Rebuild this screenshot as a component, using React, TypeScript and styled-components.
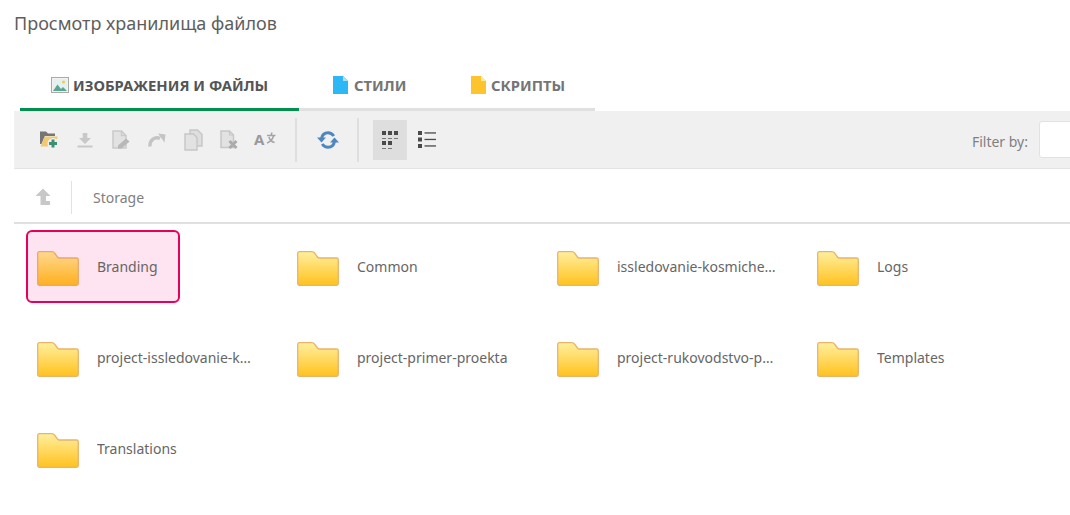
import styled, { createGlobalStyle } from 'styled-components';

const GlobalStyle = createGlobalStyle`
  html, body {
    margin: 0;
    padding: 0;
    background: #ffffff;
    overflow: hidden;
  }
  body {
    font-family: "Noto Sans", "Open Sans", sans-serif;
    color: #5b5b5b;
  }
`;

const Page = styled.div`
  width: 1070px;
  height: 515px;
  overflow: hidden;
  padding: 11px 0 0 14px;
  box-sizing: border-box;
`;

const Title = styled.h1`
  margin: 0;
  height: 24px;
  font-size: 18px;
  line-height: 24px;
  font-weight: 400;
  color: #5e5e5e;
`;

const TabStrip = styled.div`
  display: flex;
  width: 575px;
  height: 36px;
  margin: 37px 0 0 6px;
  border-bottom: 3px solid #e0e0e0;
`;

const Tab = styled.div<{ $active?: boolean; $width: number; $pad: number; $gap: number }>`
  display: flex;
  align-items: center;
  gap: ${({ $gap }) => $gap}px;
  width: ${({ $width }) => $width}px;
  height: 39px;
  padding: 0 0 11px ${({ $pad }) => $pad}px;
  box-sizing: border-box;
  border-bottom: 3px solid ${({ $active }) => ($active ? '#008f4c' : 'transparent')};
  font-size: 14.8px;
  font-weight: 700;
  color: ${({ $active }) => ($active ? '#555555' : '#757575')};
  white-space: nowrap;
`;

const Toolbar = styled.div`
  display: flex;
  align-items: center;
  width: 1090px;
  height: 58px;
  box-sizing: border-box;
  background: #f0f0f0;
  border-bottom: 1px solid #e4e4e4;
`;

const ToolGroup = styled.div<{ $width: number; $pad: number }>`
  display: flex;
  align-items: center;
  width: ${({ $width }) => $width}px;
  height: 44px;
  padding-left: ${({ $pad }) => $pad}px;
  box-sizing: border-box;
  border-right: 2px solid #dfdfdf;
`;

const ToolButton = styled.div`
  display: flex;
  align-items: center;
  justify-content: center;
  width: 36px;
  height: 40px;
  flex-shrink: 0;
`;

const ViewButton = styled(ToolButton)<{ $active?: boolean }>`
  width: 34px;
  background: ${({ $active }) => ($active ? '#dedede' : 'transparent')};
`;

const ViewGroup = styled.div`
  display: flex;
  gap: 3px;
  margin-left: 14px;
`;

const FilterBox = styled.div`
  display: flex;
  align-items: center;
  gap: 11px;
  margin-left: auto;
`;

const FilterLabel = styled.span`
  padding-top: 3px;
  font-size: 14px;
  color: #808080;
`;

const FilterInput = styled.input`
  width: 65px;
  height: 37px;
  padding: 0;
  box-sizing: border-box;
  background: #ffffff;
  border: 1px solid #e2e2e2;
  border-radius: 3px 0 0 3px;
`;

const PathBar = styled.div`
  display: flex;
  align-items: center;
  width: 1056px;
  height: 55px;
  padding-top: 3px;
  box-sizing: border-box;
  border-bottom: 2px solid #e0e0e0;
`;

const UpButton = styled.div`
  display: flex;
  align-items: center;
  justify-content: center;
  width: 57px;
  height: 33px;
  border-right: 1px solid #e2e2e2;
`;

const PathLabel = styled.span`
  margin-left: 21px;
  padding-top: 1px;
  font-size: 14px;
  color: #808080;
`;

const FolderGrid = styled.div`
  display: grid;
  grid-template-columns: repeat(4, 260px);
  grid-auto-rows: 73px;
  row-gap: 18px;
  margin: 6px 0 0 12px;
`;

const FolderCard = styled.div<{ $selected?: boolean }>`
  display: flex;
  align-items: center;
  gap: 18px;
  justify-self: start;
  height: 73px;
  padding: 0 20px 0 9px;
  box-sizing: border-box;
  border-radius: 6px;
  border: 2px solid ${({ $selected }) => ($selected ? '#e6005c' : 'transparent')};
  background: ${({ $selected }) => ($selected ? '#fde4f0' : 'transparent')};
`;

const FolderSvg = styled.svg`
  flex-shrink: 0;
  margin-top: 3px;
`;

const FolderName = styled.span`
  display: block;
  max-width: 160px;
  overflow: hidden;
  text-overflow: ellipsis;
  white-space: nowrap;
  font-size: 14px;
  line-height: 20px;
  color: #666666;
`;

const ImageTabIcon = () => (
  <svg width="18" height="16" viewBox="0 0 18 16">
    <rect x="0.5" y="0.5" width="17" height="15" fill="#f2f2f2" stroke="#a9a9a9" />
    <rect x="2" y="2" width="14" height="12" fill="#e5f1ee" />
    <circle cx="12.5" cy="5" r="1.6" fill="#f3c95a" />
    <path d="M2 14 L6.5 7.5 L10 12 L12 10 L16 14 Z" fill="#5aa58f" />
  </svg>
);

const PageTabIcon = ({ main, fold }: { main: string; fold: string }) => (
  <svg width="15" height="18" viewBox="0 0 15 18">
    <path d="M0 0 H10 L15 5 V18 H0 Z" fill={main} />
    <path d="M10 0 L15 5 H10 Z" fill={fold} />
  </svg>
);

const NewFolderIcon = () => (
  <svg width="20" height="18" viewBox="0 0 20 18">
    <path d="M1 0.5 H7 L9 2.5 H16 V5 H6 L2.5 13 H1 Z" fill="#757575" />
    <path d="M5.5 5.5 H19 L15 15.5 H1.5 Z" fill="#f4c873" />
    <circle cx="14" cy="12.5" r="5.5" fill="#f0f0f0" />
    <path d="M12.5 8.5 H15.5 V11 H18 V14 H15.5 V16.5 H12.5 V14 H10 V11 H12.5 Z" fill="#3d8f74" />
  </svg>
);

const DownloadIcon = () => (
  <svg width="16" height="16" viewBox="0 0 16 16">
    <path d="M5.7 1 H10.3 V6 H14 L8 12 L2 6 H5.7 Z" fill="#c8c8c8" />
    <rect x="0.5" y="13.5" width="15" height="2" fill="#c8c8c8" />
  </svg>
);

const EditFileIcon = () => (
  <svg width="18" height="19" viewBox="0 0 18 19">
    <path d="M1 1 H9.5 L14 5.5 V18 H1 Z" fill="#e2e2e2" stroke="#c9c9c9" strokeWidth="1.5" />
    <path d="M9.5 1 V5.5 H14" fill="none" stroke="#c9c9c9" strokeWidth="1.3" />
    <path d="M6 15.5 L14 8.5 L17.6 11.5 L9.5 18.6 L6 18.6 Z" fill="#b8b8b8" />
  </svg>
);

const RedoIcon = () => (
  <svg width="18" height="14" viewBox="0 0 18 14">
    <path d="M2 13.5 C1.5 7 7 3 12 5.5" fill="none" stroke="#c4c4c4" strokeWidth="3.4" />
    <path d="M10 0.5 L17.5 1.5 L16.5 9.5 Z" fill="#c4c4c4" />
  </svg>
);

const CopyIcon = () => (
  <svg width="19" height="22" viewBox="0 0 19 22">
    <path d="M6 1 H13.5 L18 5.5 V17 H6 Z" fill="#dedede" stroke="#c6c6c6" strokeWidth="1.4" />
    <path d="M1 5 H9.5 L13 8.5 V21 H1 Z" fill="#e2e2e2" stroke="#c6c6c6" strokeWidth="1.4" />
  </svg>
);

const DeleteFileIcon = () => (
  <svg width="18" height="19" viewBox="0 0 18 19">
    <path d="M1 1 H9.5 L13.5 5 V17.5 H1 Z" fill="#e2e2e2" stroke="#c6c6c6" strokeWidth="1.5" />
    <path d="M9.5 1 V5 H13.5" fill="none" stroke="#c6c6c6" strokeWidth="1.2" />
    <path d="M9.5 11 L16.5 18 M16.5 11 L9.5 18" stroke="#ababab" strokeWidth="3" />
  </svg>
);

const TranslateIcon = () => (
  <svg width="22" height="15" viewBox="0 0 22 15">
    <text x="0" y="13" fontFamily="Noto Sans, sans-serif" fontSize="15" fontWeight="700" fill="#999999">A</text>
    <path d="M13 3.5 H21.5 M18 0.5 L17 3.5 M19.5 4 C18.5 7.5 16 10 13 11 M15 5 C15.5 7.5 17 9.5 20.5 10.5" fill="none" stroke="#a4a4a4" strokeWidth="1.5" />
  </svg>
);

const RefreshIcon = () => (
  <svg width="22" height="18" viewBox="0 0 22 18">
    <path d="M4.5 7.5 C5.2 3.8 8 1.7 11 1.7 C13.5 1.7 15.3 2.8 16.8 5" fill="none" stroke="#4f86bd" strokeWidth="3" />
    <path d="M0 6.5 H9 L4.5 11.5 Z" fill="#4f86bd" />
    <path d="M17.5 10.5 C16.8 14.2 14 16.3 11 16.3 C8.5 16.3 6.7 15.2 5.2 13" fill="none" stroke="#4f86bd" strokeWidth="3" />
    <path d="M13 11.5 H22 L17.5 6.5 Z" fill="#4f86bd" />
  </svg>
);

const TileViewIcon = () => (
  <svg width="16" height="18" viewBox="0 0 16 18" fill="#4a4a4a">
    <rect x="0" y="0" width="4" height="4" />
    <rect x="6" y="0" width="4" height="4" />
    <rect x="12" y="0" width="4" height="4" />
    <rect x="0" y="7" width="4" height="1" fill="#777" />
    <rect x="6" y="7" width="4" height="1" fill="#777" />
    <rect x="12" y="7" width="4" height="1" fill="#777" />
    <rect x="0" y="10" width="4" height="4" />
    <rect x="6" y="10" width="4" height="4" />
    <rect x="0" y="17" width="4" height="1" fill="#777" />
    <rect x="6" y="17" width="4" height="1" fill="#777" />
  </svg>
);

const ListViewIcon = () => (
  <svg width="18" height="17" viewBox="0 0 18 17" fill="#4a4a4a">
    <rect x="0" y="0" width="4" height="4" />
    <rect x="0" y="6.5" width="4" height="4" />
    <rect x="0" y="13" width="4" height="4" />
    <rect x="6.5" y="1.3" width="11.5" height="1.3" />
    <rect x="6.5" y="7.8" width="11.5" height="1.3" />
    <rect x="6.5" y="14.3" width="11.5" height="1.3" />
  </svg>
);

const UpIcon = () => (
  <svg width="16" height="18" viewBox="0 0 16 18">
    <path d="M8 0.5 L15.5 8 H11 V13 H15 V17 H5.5 V8 H0.5 Z" fill="#c8c8c8" />
  </svg>
);

const FolderIcon = ({ id, top, bottom, edge }: { id: string; top: string; bottom: string; edge: string }) => (
  <FolderSvg width="42" height="35" viewBox="0 0 42 35">
    <defs>
      <linearGradient id={id} x1="0" y1="0" x2="0" y2="1">
        <stop offset="0" stopColor={top} />
        <stop offset="1" stopColor={bottom} />
      </linearGradient>
    </defs>
    <path
      d="M2.5 0.7 H15 Q16.5 0.7 17.5 2 L20.5 6 Q21.3 7 22.5 7 H39.5 Q41.3 7 41.3 8.8 V32.5 Q41.3 34.3 39.5 34.3 H2.5 Q0.7 34.3 0.7 32.5 V2.5 Q0.7 0.7 2.5 0.7 Z"
      fill={`url(#${id})`}
      stroke={edge}
      strokeWidth="1.3"
    />
  </FolderSvg>
);

const folders = [
  'Branding',
  'Common',
  'issledovanie-kosmicheskogo-prostranstva',
  'Logs',
  'project-issledovanie-kosmosa',
  'project-primer-proekta',
  'project-rukovodstvo-polzovatelya',
  'Templates',
  'Translations',
];

export default function App() {
  return (
    <Page>
      <GlobalStyle />
      <Title>Просмотр хранилища файлов</Title>
      <TabStrip>
        <Tab $active $width={279} $pad={31} $gap={4}>
          <ImageTabIcon />
          ИЗОБРАЖЕНИЯ И ФАЙЛЫ
        </Tab>
        <Tab $width={146} $pad={34} $gap={6}>
          <PageTabIcon main="#2db7f5" fold="#a6e0fb" />
          СТИЛИ
        </Tab>
        <Tab $width={150} $pad={26} $gap={5}>
          <PageTabIcon main="#fdc42d" fold="#fdeb9c" />
          СКРИПТЫ
        </Tab>
      </TabStrip>
      <Toolbar>
        <ToolGroup $width={283} $pad={17}>
          <ToolButton><NewFolderIcon /></ToolButton>
          <ToolButton><DownloadIcon /></ToolButton>
          <ToolButton><EditFileIcon /></ToolButton>
          <ToolButton><RedoIcon /></ToolButton>
          <ToolButton><CopyIcon /></ToolButton>
          <ToolButton><DeleteFileIcon /></ToolButton>
          <ToolButton><TranslateIcon /></ToolButton>
        </ToolGroup>
        <ToolGroup $width={62} $pad={13}>
          <ToolButton><RefreshIcon /></ToolButton>
        </ToolGroup>
        <ViewGroup>
          <ViewButton $active><TileViewIcon /></ViewButton>
          <ViewButton><ListViewIcon /></ViewButton>
        </ViewGroup>
        <FilterBox>
          <FilterLabel>Filter by:</FilterLabel>
          <FilterInput />
        </FilterBox>
      </Toolbar>
      <PathBar>
        <UpButton><UpIcon /></UpButton>
        <PathLabel>Storage</PathLabel>
      </PathBar>
      <FolderGrid>
        {folders.map((name, i) => (
          <FolderCard key={name} $selected={i === 0}>
            {i === 0 ? (
              <FolderIcon id="folder-sel" top="#ffd88f" bottom="#ffb01f" edge="#eba76a" />
            ) : (
              <FolderIcon id={`folder-${i}`} top="#ffef9e" bottom="#ffc21f" edge="#e8b46a" />
            )}
            <FolderName>{name}</FolderName>
          </FolderCard>
        ))}
      </FolderGrid>
    </Page>
  );
}
